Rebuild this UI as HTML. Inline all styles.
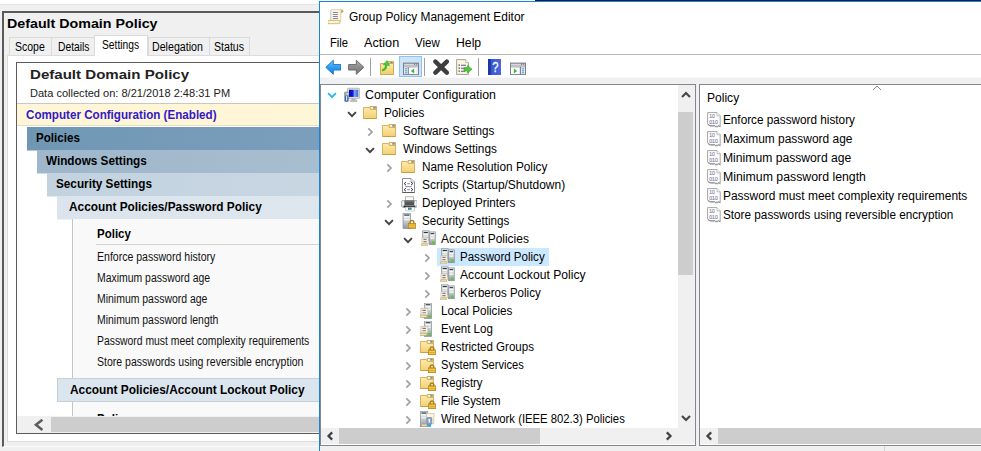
<!DOCTYPE html><html><head><meta charset="utf-8"><title>Group Policy</title><style>
*{box-sizing:border-box;margin:0;padding:0}
html,body{width:981px;height:451px;overflow:hidden;background:#f0f0f0;font-family:"Liberation Sans",sans-serif;color:#000}
.a{position:absolute}
.t{position:absolute;white-space:nowrap;transform-origin:0 0;line-height:1}
#left{position:absolute;left:0;top:0;width:319px;height:451px;overflow:hidden;background:#f0f0f0}
#right{position:absolute;left:319px;top:1px;width:662px;height:450px;background:#fff;border-left:1px solid #1883d7;border-top:1px solid #1883d7;overflow:hidden}
.b{font-weight:bold}
</style></head><body><div id="left">
<div class="a" style="left:0;top:0;width:319px;height:5px;background:#fdfdfd"></div>
<div class="a" style="left:0;top:4px;width:319px;height:1px;background:#e3e3e3"></div>
<div class="a" style="left:2px;top:11px;width:330px;height:436px;border-left:2px solid #5a5a5a;border-top:2px solid #5a5a5a;border-bottom:1px solid #fbfbfb;background:#f0f0f0"></div>
<div class="t b" style="left:7.04px;top:16px;font-size:13.7px;line-height:15px;transform:scaleX(1.0414)">Default Domain Policy</div>
<div class="a" style="left:7px;top:55px;width:330px;height:387px;border:1px solid #dcdcdc;background:#fff"></div>
<div class="a" style="left:9px;top:37px;width:43px;height:18px;background:#f0f0f0;border:1px solid #dadada;border-bottom:0"></div>
<div class="t" style="left:15.19px;top:40px;font-size:12px;line-height:14px;transform:scaleX(0.8753)">Scope</div>
<div class="a" style="left:51px;top:37px;width:44px;height:18px;background:#f0f0f0;border:1px solid #dadada;border-bottom:0"></div>
<div class="t" style="left:57.94px;top:40px;font-size:12px;line-height:14px;transform:scaleX(0.8584)">Details</div>
<div class="a" style="left:94px;top:35px;width:54px;height:21px;background:#fff;border:1px solid #dadada;border-bottom:0"></div>
<div class="t" style="left:102.31px;top:38px;font-size:12px;line-height:14px;transform:scaleX(0.8558)">Settings</div>
<div class="a" style="left:148px;top:37px;width:62px;height:18px;background:#f0f0f0;border:1px solid #dadada;border-bottom:0"></div>
<div class="t" style="left:152.09px;top:40px;font-size:12px;line-height:14px;transform:scaleX(0.8868)">Delegation</div>
<div class="a" style="left:209px;top:37px;width:41px;height:18px;background:#f0f0f0;border:1px solid #dadada;border-bottom:0"></div>
<div class="t" style="left:214.41px;top:40px;font-size:12px;line-height:14px;transform:scaleX(0.8824)">Status</div>
<div class="a" style="left:16px;top:62px;width:320px;height:372px;border:1px solid #5c5c5c;background:#fff"></div>
<div class="t b" style="left:29.60px;top:67px;font-size:13.6px;line-height:15px;transform:scaleX(1.1084);color:#222">Default Domain Policy</div>
<div class="t" style="left:29.82px;top:87px;font-size:11.6px;line-height:12px;transform:scaleX(0.9525);color:#222">Data collected on: 8/21/2018 2:48:31 PM</div>
<div class="a" style="left:17px;top:103px;width:320px;height:23px;background:#fef6d6;border-top:1px solid #c8c8c0;border-bottom:1px solid #e6dfc4"></div>
<div class="t b" style="left:26.34px;top:108px;font-size:12px;line-height:14px;transform:scaleX(0.9690);color:#3418c8">Computer Configuration (Enabled)</div>
<div class="a" style="left:27px;top:127px;width:300px;height:24px;background:linear-gradient(90deg,#6f97b4,#7b9fbc);border-bottom:1px solid rgba(255,255,255,.5)"></div>
<div class="t b" style="left:35.86px;top:131px;font-size:12px;line-height:14px;transform:scaleX(0.9669)">Policies</div>
<div class="a" style="left:37px;top:150px;width:300px;height:24px;background:linear-gradient(90deg,#9fb7cb,#a8bed1);border-bottom:1px solid rgba(255,255,255,.5)"></div>
<div class="t b" style="left:45.77px;top:154px;font-size:12px;line-height:14px;transform:scaleX(0.9763)">Windows Settings</div>
<div class="a" style="left:47px;top:173px;width:300px;height:24px;background:linear-gradient(90deg,#c2d2df,#c9d7e3);border-bottom:1px solid rgba(255,255,255,.5)"></div>
<div class="t b" style="left:56.02px;top:177px;font-size:12px;line-height:14px;transform:scaleX(0.9784)">Security Settings</div>
<div class="a" style="left:57px;top:196px;width:300px;height:24px;background:linear-gradient(90deg,#dbe4ec,#dfe7ee);border-bottom:1px solid rgba(255,255,255,.5)"></div>
<div class="t b" style="left:69.40px;top:200px;font-size:12px;line-height:14px;transform:scaleX(0.9863)">Account Policies/Password Policy</div>
<div class="a" style="left:72px;top:219px;width:260px;height:197px;background:#f9f9f9;border-left:1px solid #c4c4c4"></div>
<div class="t b" style="left:97.16px;top:227px;font-size:12px;line-height:14px;transform:scaleX(0.9578)">Policy</div>
<div class="a" style="left:96px;top:244px;width:240px;height:1px;background:#d4d4d4"></div>
<div class="t" style="left:96.59px;top:250px;font-size:12.5px;line-height:14px;transform:scaleX(0.8431);color:#111">Enforce password history</div>
<div class="t" style="left:96.57px;top:271px;font-size:12.5px;line-height:14px;transform:scaleX(0.8348);color:#111">Maximum password age</div>
<div class="t" style="left:96.56px;top:292px;font-size:12.5px;line-height:14px;transform:scaleX(0.8364);color:#111">Minimum password age</div>
<div class="t" style="left:96.93px;top:313px;font-size:12.5px;line-height:14px;transform:scaleX(0.8363);color:#111">Minimum password length</div>
<div class="t" style="left:96.57px;top:334px;font-size:12.5px;line-height:14px;transform:scaleX(0.8302);color:#111">Password must meet complexity requirements</div>
<div class="t" style="left:97.17px;top:355px;font-size:12.5px;line-height:14px;transform:scaleX(0.8417);color:#111">Store passwords using reversible encryption</div>
<div class="a" style="left:57px;top:378px;width:300px;height:24px;background:#dbe5ee;border:1px solid #c3d0dc"></div>
<div class="t b" style="left:69.80px;top:383px;font-size:12px;line-height:14px;transform:scaleX(0.9910)">Account Policies/Account Lockout Policy</div>
<div class="a" style="left:90px;top:404px;width:100px;height:12px;overflow:hidden"><div class="t b" style="left:7.16px;top:8px;font-size:12px;line-height:14px;transform:scaleX(0.9578)">Policy</div></div>
<div class="a" style="left:17px;top:416px;width:320px;height:17px;background:#f0f0f0"></div>
<div class="a" style="left:51px;top:417px;width:300px;height:15px;background:#cdcdcd"></div>
<svg class="a" style="left:33px;top:418px" width="12" height="14" viewBox="0 0 12 14"><path d="M9.4 1.7L3 6.8 9.4 11.9" fill="none" stroke="#5e5e5e" stroke-width="2.6"/></svg>
</div>
<div id="right">
<div class="t" style="left:29.26px;top:8px;font-size:12px;line-height:14px;transform:scaleX(0.9928)">Group Policy Management Editor</div>
<div class="t" style="left:9.91px;top:34px;font-size:12px;line-height:14px;transform:scaleX(0.9352)">File</div>
<div class="t" style="left:44.20px;top:34px;font-size:12px;line-height:14px;transform:scaleX(1.0556)">Action</div>
<div class="t" style="left:95.10px;top:34px;font-size:12px;line-height:14px;transform:scaleX(0.9592)">View</div>
<div class="t" style="left:135.95px;top:34px;font-size:12px;line-height:14px;transform:scaleX(1.0187)">Help</div>
<div class="a" style="left:0;top:52px;width:662px;height:1px;background:#b8b8b8"></div>
<svg class="a" style="left:8px;top:7px" width="16" height="16" viewBox="0 0 16 16"><linearGradient id="g1" x1="0" y1="0" x2="1" y2="0"><stop offset="0" stop-color="#e9e2cc"/><stop offset=".25" stop-color="#fefae8"/><stop offset="1" stop-color="#fbf1c8"/></linearGradient><path d="M13.2 1a1.3 1.3 0 0 1 1.4 2.2l-1.2.9-.6-2.4z" fill="#d9b040" stroke="#b08c30" stroke-width=".4"/><path d="M3.2 0.6H13.4L12.8 3.2V11.8H2.6V1.6Z" fill="url(#g1)" stroke="#c4bca4" stroke-width=".6"/><path d="M0.9 11.4H10.6a1.6 1.6 0 0 1 0 3.3H1.4a1.6 1.6 0 0 1-.5-3.3Z" fill="#fbeeb8" stroke="#c0a860" stroke-width=".7"/><path d="M2 12.9H9.4" stroke="#fffdf0" stroke-width="1"/><path d="M4.9 3.5H9.9M4.9 5.5H9.9M4.9 7.5H9.9M4.9 9.5H9.9" stroke="#8484b4" stroke-width="1"/></svg>
<svg class="a" style="left:4.5px;top:57px" width="16" height="16" viewBox="0 0 16 16"><linearGradient id="g2" x1="0" y1="0" x2="0" y2="1"><stop offset="0" stop-color="#7cc8ff"/><stop offset=".5" stop-color="#2e9cf0"/><stop offset="1" stop-color="#1a7edc"/></linearGradient><path d="M0.8 8.3L8.3 1.3V5.6H16V11H8.3V15.3Z" fill="url(#g2)" stroke="#1f74c8" stroke-width="1" stroke-linejoin="round"/></svg>
<svg class="a" style="left:27.5px;top:57px" width="16" height="16" viewBox="0 0 16 16"><linearGradient id="g3" x1="0" y1="0" x2="0" y2="1"><stop offset="0" stop-color="#b4b4b4"/><stop offset=".5" stop-color="#8c8c8c"/><stop offset="1" stop-color="#787878"/></linearGradient><path d="M15.8 8.3L8.3 1.3V5.6H0.6V11H8.3V15.3Z" fill="url(#g3)" stroke="#6a6a6a" stroke-width="1" stroke-linejoin="round"/></svg>
<div class="a" style="left:50px;top:56px;width:1px;height:18px;background:#a0a0a0"></div>
<div class="a" style="left:104px;top:56px;width:1px;height:18px;background:#a0a0a0"></div>
<div class="a" style="left:158px;top:56px;width:1px;height:18px;background:#a0a0a0"></div>
<svg class="a" style="left:59.80000000000001px;top:57.7px" width="16" height="16" viewBox="0 0 16 16"><linearGradient id="g4" x1="0" y1="0" x2="0" y2="1"><stop offset="0" stop-color="#fdebb0"/><stop offset="1" stop-color="#f1cb6a"/></linearGradient><path d="M7 1.5H13.5V5H7Z" fill="#f2d484" stroke="#d4ac54"/><rect x="10.3" y="2.2" width="2.3" height="1.3" fill="#2f86e8"/><path d="M0.5 3.5H13.5V14.5H0.5Z" fill="url(#g4)" stroke="#d4aa50"/><path d="M2 10.5C4.5 10 6 8 6.2 5.2" fill="none" stroke="#3cc030" stroke-width="2.2"/><path d="M3.2 4.8L7 0.6 9.6 5.6Z" fill="#44cc36" stroke="#2ea02c" stroke-width=".5"/></svg>
<div class="a" style="left:79px;top:54px;width:23px;height:21px;background:#cce4f7;border:1px solid #8cc4f2"></div>
<svg class="a" style="left:83px;top:58.5px" width="16" height="16" viewBox="0 0 16 16"><rect x="0" y="1.6" width="16" height="12.4" fill="#7a808c"/><rect x="1" y="2.8" width="10" height=".9" fill="#fff"/><rect x="12.1" y="2.8" width="1" height=".9" fill="#fff"/><rect x="13.9" y="2.8" width="1" height=".9" fill="#fff"/><rect x="1" y="4.5" width="14" height="1" fill="#fff"/><rect x="1" y="6.3" width="3.7" height="6.8" fill="#fff"/><rect x="5.8" y="6.3" width="9.2" height="6.8" fill="#fff"/><rect x="13.2" y="6.3" width="1.8" height="6.8" fill="#ececec"/><path d="M1.7 7.9H4.1M1.7 9.9H4.1M1.7 11.9H4.1" stroke="#3a7ac8" stroke-width="1"/><path d="M11.2 7.4V12.6L7.8 10Z" fill="#3cb83c"/></svg>
<svg class="a" style="left:112.5px;top:57px" width="16" height="16" viewBox="0 0 16 16"><path d="M2.4 2.6L13.8 13.6M13.8 2.6L2.4 13.6" stroke="#3e3e3e" stroke-width="4.4" stroke-linecap="round"/></svg>
<svg class="a" style="left:135.8px;top:57px" width="16" height="16" viewBox="0 0 16 16"><path d="M0.6 0.6H9.6L12.6 3.6V15.4H0.6Z" fill="#fbf5dc" stroke="#a2a2a2"/><path d="M9.6 0.6V3.6H12.6" fill="#fff" stroke="#b0b0b0" stroke-width=".8"/><path d="M2.6 6.2h1.2M2.6 9.2h1.2M2.6 12.2h1.2" stroke="#333" stroke-width="1.2"/><path d="M5 6.2H10M5 9.2H8M5 12.2H9.4" stroke="#5a58a8" stroke-width="1.1"/><path d="M8 8.6H11.4V6.4L16 10.2 11.4 14V11.8H8Z" fill="#4cc838" stroke="#2f9a2a" stroke-width=".6"/></svg>
<svg class="a" style="left:168px;top:56.8px" width="13" height="16" viewBox="0 0 13 16"><linearGradient id="g5" x1="0" y1="0" x2="1" y2="0"><stop offset="0" stop-color="#2742b4"/><stop offset=".3" stop-color="#3a5ad4"/><stop offset="1" stop-color="#4a68dc"/></linearGradient><rect x="0" y="0" width="13" height="16" fill="url(#g5)"/><rect x="0" y="0" width="2.8" height="16" fill="#1d38a0"/><text x="0" y="13.4" text-anchor="middle" font-family="Liberation Sans, sans-serif" font-size="15" fill="#fff" stroke="#fff" stroke-width=".3" transform="translate(7.4,0) scale(.74,1)">?</text></svg>
<svg class="a" style="left:190px;top:58.5px" width="16" height="16" viewBox="0 0 16 16"><rect x="0" y="1.6" width="16" height="12.4" fill="#7a808c"/><rect x="1" y="2.8" width="10" height=".9" fill="#fff"/><rect x="12.1" y="2.8" width="1" height=".9" fill="#fff"/><rect x="13.9" y="2.8" width="1" height=".9" fill="#fff"/><rect x="1" y="4.5" width="14" height="1" fill="#fff"/><rect x="1" y="6.3" width="8.8" height="6.8" fill="#fff"/><rect x="11" y="6.3" width="4" height="6.8" fill="#fff"/><path d="M11.7 7.9H14.3M11.7 9.9H14.3M11.7 11.9H14.3" stroke="#3a7ac8" stroke-width="1"/><path d="M3.8 7.4V12.6L7.2 10Z" fill="#3cb83c"/></svg>
<div class="a" style="left:0;top:75px;width:662px;height:400px;background:#f0f0f0;border-top:1px solid #f8f8f8"></div>
<div class="a" style="left:0;top:82px;width:376px;height:362px;background:#fff;border:1px solid #828790"></div>
<div class="a" style="left:379px;top:82px;width:300px;height:362px;background:#fff;border:1px solid #828790"></div>
<svg class="a" style="left:7.400000000000034px;top:90.1px" width="10" height="7" viewBox="0 0 10 7"><path d="M1.1 1.2L5 5.1 8.9 1.2" fill="none" stroke="#2cb4f0" stroke-width="1.9"/></svg>
<svg class="a" style="left:24.0px;top:85px" width="16" height="16" viewBox="0 0 16 16"><linearGradient id="g6" x1="0" y1="0" x2="1" y2="0"><stop offset="0" stop-color="#0008c0"/><stop offset=".45" stop-color="#0a20d8"/><stop offset=".55" stop-color="#88a4f8"/><stop offset="1" stop-color="#3c64ec"/></linearGradient><rect x="3.4" y="1.2" width="12.2" height="10.4" rx="1" fill="#dfdcd0" stroke="#a8a79c" stroke-width=".7"/><rect x="5" y="2.8" width="9.2" height="7.1" fill="url(#g6)"/><path d="M8 11.8h3l.6 1.4H7.4z" fill="#b8b8b4"/><rect x="6.2" y="13" width="6.8" height="1.6" rx=".6" fill="#c8c8c4" stroke="#9a9a96" stroke-width=".5"/><rect x="0.4" y="5" width="4.2" height="9.6" rx="1.2" fill="#a9acb0" stroke="#7c7f86" stroke-width=".6"/><rect x="1.1" y="8.4" width="3" height="6" rx="1.2" fill="#2f5fb4"/><rect x="2" y="9" width="1.2" height="4.6" fill="#dfeaff"/><rect x="1.2" y="6.6" width="1" height="1" fill="#4cd038"/><path d="M2.5 6.2l2 1.6M4.5 6.2l-2 1.6" stroke="#f4f4f4" stroke-width=".8"/></svg>
<div class="t" style="left:44.82px;top:86px;font-size:12px;line-height:14px;transform:scaleX(1.0280)">Computer Configuration</div>
<svg class="a" style="left:26.53000000000003px;top:108.5px" width="10" height="7" viewBox="0 0 10 7"><path d="M1.1 1.2L5 5.1 8.9 1.2" fill="none" stroke="#404040" stroke-width="1.9"/></svg>
<svg class="a" style="left:42.9px;top:103px" width="16" height="16" viewBox="0 0 16 16"><linearGradient id="g7" x1="0" y1="0" x2="0" y2="1"><stop offset="0" stop-color="#fdebb0"/><stop offset="1" stop-color="#f3cf72"/></linearGradient><path d="M7 1.5H13.5V6H7Z" fill="#f2d484" stroke="#d4ac54"/><rect x="8" y="2.2" width="2.4" height="1.3" fill="#fff"/><rect x="10.3" y="2.2" width="2.3" height="1.3" fill="#2f86e8"/><path d="M0.5 2.5H6.2L7.6 4.5H13.5V13.5H0.5Z" fill="url(#g7)" stroke="#d8b25a"/><path d="M0.5 13.5H13.5" stroke="#c99f45"/></svg>
<div class="t" style="left:63.50px;top:104px;font-size:12px;line-height:14px;transform:scaleX(0.9747)">Policies</div>
<svg class="a" style="left:46.960000000000036px;top:125.19999999999999px" width="7" height="10" viewBox="0 0 7 10"><path d="M1.3 1.3L5 5 1.3 8.7" fill="none" stroke="#a0a0a0" stroke-width="1.7"/></svg>
<svg class="a" style="left:61.9px;top:121px" width="16" height="16" viewBox="0 0 16 16"><linearGradient id="g8" x1="0" y1="0" x2="0" y2="1"><stop offset="0" stop-color="#fdebb0"/><stop offset="1" stop-color="#f3cf72"/></linearGradient><path d="M7 1.5H13.5V6H7Z" fill="#f2d484" stroke="#d4ac54"/><rect x="8" y="2.2" width="2.4" height="1.3" fill="#fff"/><rect x="10.3" y="2.2" width="2.3" height="1.3" fill="#2f86e8"/><path d="M0.5 2.5H6.2L7.6 4.5H13.5V13.5H0.5Z" fill="url(#g8)" stroke="#d8b25a"/><path d="M0.5 13.5H13.5" stroke="#c99f45"/></svg>
<div class="t" style="left:83.23px;top:122px;font-size:12px;line-height:14px;transform:scaleX(0.9699)">Software Settings</div>
<svg class="a" style="left:45.460000000000036px;top:144.5px" width="10" height="7" viewBox="0 0 10 7"><path d="M1.1 1.2L5 5.1 8.9 1.2" fill="none" stroke="#404040" stroke-width="1.9"/></svg>
<svg class="a" style="left:61.9px;top:139px" width="16" height="16" viewBox="0 0 16 16"><linearGradient id="g9" x1="0" y1="0" x2="0" y2="1"><stop offset="0" stop-color="#fdebb0"/><stop offset="1" stop-color="#f3cf72"/></linearGradient><path d="M7 1.5H13.5V6H7Z" fill="#f2d484" stroke="#d4ac54"/><rect x="8" y="2.2" width="2.4" height="1.3" fill="#fff"/><rect x="10.3" y="2.2" width="2.3" height="1.3" fill="#2f86e8"/><path d="M0.5 2.5H6.2L7.6 4.5H13.5V13.5H0.5Z" fill="url(#g9)" stroke="#d8b25a"/><path d="M0.5 13.5H13.5" stroke="#c99f45"/></svg>
<div class="t" style="left:83.43px;top:140px;font-size:12px;line-height:14px;transform:scaleX(0.9843)">Windows Settings</div>
<svg class="a" style="left:65.89000000000004px;top:161.2px" width="7" height="10" viewBox="0 0 7 10"><path d="M1.3 1.3L5 5 1.3 8.7" fill="none" stroke="#a0a0a0" stroke-width="1.7"/></svg>
<svg class="a" style="left:80.8px;top:157px" width="16" height="16" viewBox="0 0 16 16"><linearGradient id="g10" x1="0" y1="0" x2="0" y2="1"><stop offset="0" stop-color="#fdebb0"/><stop offset="1" stop-color="#f3cf72"/></linearGradient><path d="M7 1.5H13.5V6H7Z" fill="#f2d484" stroke="#d4ac54"/><rect x="8" y="2.2" width="2.4" height="1.3" fill="#fff"/><rect x="10.3" y="2.2" width="2.3" height="1.3" fill="#2f86e8"/><path d="M0.5 2.5H6.2L7.6 4.5H13.5V13.5H0.5Z" fill="url(#g10)" stroke="#d8b25a"/><path d="M0.5 13.5H13.5" stroke="#c99f45"/></svg>
<div class="t" style="left:102.39px;top:158px;font-size:12px;line-height:14px;transform:scaleX(0.9845)">Name Resolution Policy</div>
<svg class="a" style="left:80.8px;top:175px" width="16" height="16" viewBox="0 0 16 16"><path d="M1.5 1.5H10L13.5 5V15.5H1.5Z" fill="#fff" stroke="#8e8e8e"/><path d="M1.5 15.5H13.5" stroke="#5c5c5c"/><path d="M10 1.5V5H13.5" fill="#f4f4f4" stroke="#9a9a9a" stroke-width=".8"/><path d="M5 5.2L3.2 6.7 5 8.2M10 5.2l1.8 1.5L10 8.2M5 11.2l-1.8 1.5L5 14.2M10 11.2l1.8 1.5-1.8 1.5" fill="none" stroke="#33333c" stroke-width="1"/><path d="M6.2 6.7H9M6.2 12.7H9M4.4 9.7H10.6" stroke="#8484b4" stroke-width="1"/></svg>
<div class="t" style="left:102.09px;top:176px;font-size:12px;line-height:14px;transform:scaleX(0.9981)">Scripts (Startup/Shutdown)</div>
<svg class="a" style="left:65.89000000000004px;top:197.2px" width="7" height="10" viewBox="0 0 7 10"><path d="M1.3 1.3L5 5 1.3 8.7" fill="none" stroke="#a0a0a0" stroke-width="1.7"/></svg>
<svg class="a" style="left:81.0px;top:193.6px" width="16" height="16" viewBox="0 0 16 16"><rect x="4.5" y="0.8" width="8" height="4.6" fill="#fff" stroke="#a4a4a4" stroke-width=".8"/><rect x="0.6" y="4.6" width="15.6" height="6.6" rx=".8" fill="#d9d9d9" stroke="#8a8a8a" stroke-width=".6"/><rect x="3.6" y="4.6" width="9.6" height="4.6" fill="#555"/><rect x="3.6" y="4.6" width="9.6" height="1.6" fill="#6d6d6d"/><rect x="2.6" y="9.6" width="11.6" height="1.8" fill="#222"/><rect x="1.3" y="5.6" width="1.6" height="3.6" fill="#f4f4f4"/><rect x="13.8" y="5.6" width="1.6" height="3.6" fill="#f4f4f4"/><path d="M4.6 11.2H13.4V15H4.6Z" fill="#fff" stroke="#b4c0d0" stroke-width=".7"/><rect x="7" y="11.6" width="1.8" height="2.2" fill="#2c6fd0"/><rect x="8.8" y="11.6" width="1.8" height="2.2" fill="#2e9a3c"/></svg>
<div class="t" style="left:102.02px;top:194px;font-size:12px;line-height:14px;transform:scaleX(0.9793)">Deployed Printers</div>
<svg class="a" style="left:64.39000000000004px;top:216.5px" width="10" height="7" viewBox="0 0 10 7"><path d="M1.1 1.2L5 5.1 8.9 1.2" fill="none" stroke="#404040" stroke-width="1.9"/></svg>
<svg class="a" style="left:80.8px;top:211px" width="16" height="16" viewBox="0 0 16 16"><linearGradient id="g11" x1="0" y1="0" x2="0" y2="1"><stop offset="0" stop-color="#dfe3e6"/><stop offset=".5" stop-color="#c9ced3"/><stop offset="1" stop-color="#8d959d"/></linearGradient><rect x="2" y="0.3" width="7.6" height="15.2" fill="url(#g11)" stroke="#8a9098" stroke-width=".7"/><rect x="3.2" y="1.5" width="5.199999999999999" height="1.1" fill="#2c3840"/><rect x="3" y="3.0999999999999996" width="5.6" height="1.6" fill="#f6f8fa"/><rect x="3" y="5.7" width="5.6" height="1.6" fill="#eef2f5"/><g transform="translate(7,6.8)"><path d="M2.2 3.8V2.6a1.8 1.8 0 0 1 3.6 0V3.8" fill="none" stroke="#a8822c" stroke-width="1.5"/><rect x="0.3" y="3.6" width="7.4" height="5" fill="#d9a41e" stroke="#a87c14" stroke-width="0.6"/><path d="M0.7 5.1H7.3M0.7 6.9H7.3" stroke="#f2d060" stroke-width="0.9"/></g></svg>
<div class="t" style="left:102.10px;top:212px;font-size:12px;line-height:14px;transform:scaleX(0.9701)">Security Settings</div>
<svg class="a" style="left:83.32000000000005px;top:234.5px" width="10" height="7" viewBox="0 0 10 7"><path d="M1.1 1.2L5 5.1 8.9 1.2" fill="none" stroke="#404040" stroke-width="1.9"/></svg>
<svg class="a" style="left:100.6px;top:228.3px" width="16" height="16" viewBox="0 0 16 16"><linearGradient id="g12" x1="0" y1="0" x2="0" y2="1"><stop offset="0" stop-color="#dfe3e6"/><stop offset=".5" stop-color="#c9ced3"/><stop offset="1" stop-color="#8d959d"/></linearGradient><rect x="1.5" y="0.8" width="6.6" height="9.5" fill="url(#g12)" stroke="#8a9098" stroke-width=".7"/><rect x="2.7" y="2.0" width="4.199999999999999" height="1.1" fill="#2c3840"/><rect x="2.5" y="3.5999999999999996" width="4.6" height="1.6" fill="#f6f8fa"/><rect x="2.5" y="6.2" width="4.6" height="1.6" fill="#eef2f5"/><linearGradient id="g13" x1="0" y1="0" x2="0" y2="1"><stop offset="0" stop-color="#dfe3e6"/><stop offset=".5" stop-color="#c9ced3"/><stop offset="1" stop-color="#8d959d"/></linearGradient><rect x="8.4" y="1.9" width="5.9" height="12.8" fill="url(#g13)" stroke="#8a9098" stroke-width=".7"/><rect x="9.6" y="3.0999999999999996" width="3.5000000000000004" height="1.1" fill="#2c3840"/><rect x="9.4" y="4.699999999999999" width="3.9000000000000004" height="1.6" fill="#f6f8fa"/><rect x="9.4" y="7.300000000000001" width="3.9000000000000004" height="1.6" fill="#eef2f5"/><rect x="11.100000000000001" y="11.5" width="2.3" height="2.3" fill="#4fd21c"/><g transform="translate(0.2,7.2) scale(1)"><path d="M0.8 0.4H7.2V6.6H0.8Z" fill="#fdf4cc" stroke="#b8b0a0" stroke-width=".6"/><path d="M2.2 2.2H5.4M2.2 4.4H5.4" stroke="#7f78b4" stroke-width="1.1"/><rect x="0" y="6.6" width="6.4" height="2.1" rx=".8" fill="#f9e7a4" stroke="#a89c7c" stroke-width=".6"/></g></svg>
<div class="t" style="left:120.95px;top:230px;font-size:12px;line-height:14px;transform:scaleX(0.9988)">Account Policies</div>
<div class="a" style="left:117px;top:246px;width:112px;height:18px;background:#cce8ff"></div>
<svg class="a" style="left:103.75px;top:251.2px" width="7" height="10" viewBox="0 0 7 10"><path d="M1.3 1.3L5 5 1.3 8.7" fill="none" stroke="#a0a0a0" stroke-width="1.7"/></svg>
<svg class="a" style="left:119.5px;top:246.3px" width="16" height="16" viewBox="0 0 16 16"><linearGradient id="g14" x1="0" y1="0" x2="0" y2="1"><stop offset="0" stop-color="#dfe3e6"/><stop offset=".5" stop-color="#c9ced3"/><stop offset="1" stop-color="#8d959d"/></linearGradient><rect x="1.5" y="0.8" width="6.6" height="9.5" fill="url(#g14)" stroke="#8a9098" stroke-width=".7"/><rect x="2.7" y="2.0" width="4.199999999999999" height="1.1" fill="#2c3840"/><rect x="2.5" y="3.5999999999999996" width="4.6" height="1.6" fill="#f6f8fa"/><rect x="2.5" y="6.2" width="4.6" height="1.6" fill="#eef2f5"/><linearGradient id="g15" x1="0" y1="0" x2="0" y2="1"><stop offset="0" stop-color="#dfe3e6"/><stop offset=".5" stop-color="#c9ced3"/><stop offset="1" stop-color="#8d959d"/></linearGradient><rect x="8.4" y="1.9" width="5.9" height="12.8" fill="url(#g15)" stroke="#8a9098" stroke-width=".7"/><rect x="9.6" y="3.0999999999999996" width="3.5000000000000004" height="1.1" fill="#2c3840"/><rect x="9.4" y="4.699999999999999" width="3.9000000000000004" height="1.6" fill="#f6f8fa"/><rect x="9.4" y="7.300000000000001" width="3.9000000000000004" height="1.6" fill="#eef2f5"/><rect x="11.100000000000001" y="11.5" width="2.3" height="2.3" fill="#4fd21c"/><g transform="translate(0.2,7.2) scale(1)"><path d="M0.8 0.4H7.2V6.6H0.8Z" fill="#fdf4cc" stroke="#b8b0a0" stroke-width=".6"/><path d="M2.2 2.2H5.4M2.2 4.4H5.4" stroke="#7f78b4" stroke-width="1.1"/><rect x="0" y="6.6" width="6.4" height="2.1" rx=".8" fill="#f9e7a4" stroke="#a89c7c" stroke-width=".6"/></g></svg>
<div class="t" style="left:140.25px;top:248px;font-size:12px;line-height:14px;transform:scaleX(0.9616)">Password Policy</div>
<svg class="a" style="left:103.75px;top:269.2px" width="7" height="10" viewBox="0 0 7 10"><path d="M1.3 1.3L5 5 1.3 8.7" fill="none" stroke="#a0a0a0" stroke-width="1.7"/></svg>
<svg class="a" style="left:119.5px;top:264.3px" width="16" height="16" viewBox="0 0 16 16"><linearGradient id="g16" x1="0" y1="0" x2="0" y2="1"><stop offset="0" stop-color="#dfe3e6"/><stop offset=".5" stop-color="#c9ced3"/><stop offset="1" stop-color="#8d959d"/></linearGradient><rect x="1.5" y="0.8" width="6.6" height="9.5" fill="url(#g16)" stroke="#8a9098" stroke-width=".7"/><rect x="2.7" y="2.0" width="4.199999999999999" height="1.1" fill="#2c3840"/><rect x="2.5" y="3.5999999999999996" width="4.6" height="1.6" fill="#f6f8fa"/><rect x="2.5" y="6.2" width="4.6" height="1.6" fill="#eef2f5"/><linearGradient id="g17" x1="0" y1="0" x2="0" y2="1"><stop offset="0" stop-color="#dfe3e6"/><stop offset=".5" stop-color="#c9ced3"/><stop offset="1" stop-color="#8d959d"/></linearGradient><rect x="8.4" y="1.9" width="5.9" height="12.8" fill="url(#g17)" stroke="#8a9098" stroke-width=".7"/><rect x="9.6" y="3.0999999999999996" width="3.5000000000000004" height="1.1" fill="#2c3840"/><rect x="9.4" y="4.699999999999999" width="3.9000000000000004" height="1.6" fill="#f6f8fa"/><rect x="9.4" y="7.300000000000001" width="3.9000000000000004" height="1.6" fill="#eef2f5"/><rect x="11.100000000000001" y="11.5" width="2.3" height="2.3" fill="#4fd21c"/><g transform="translate(0.2,7.2) scale(1)"><path d="M0.8 0.4H7.2V6.6H0.8Z" fill="#fdf4cc" stroke="#b8b0a0" stroke-width=".6"/><path d="M2.2 2.2H5.4M2.2 4.4H5.4" stroke="#7f78b4" stroke-width="1.1"/><rect x="0" y="6.6" width="6.4" height="2.1" rx=".8" fill="#f9e7a4" stroke="#a89c7c" stroke-width=".6"/></g></svg>
<div class="t" style="left:140.30px;top:266px;font-size:12px;line-height:14px;transform:scaleX(1.0118)">Account Lockout Policy</div>
<svg class="a" style="left:103.75px;top:287.2px" width="7" height="10" viewBox="0 0 7 10"><path d="M1.3 1.3L5 5 1.3 8.7" fill="none" stroke="#a0a0a0" stroke-width="1.7"/></svg>
<svg class="a" style="left:119.5px;top:282.3px" width="16" height="16" viewBox="0 0 16 16"><linearGradient id="g18" x1="0" y1="0" x2="0" y2="1"><stop offset="0" stop-color="#dfe3e6"/><stop offset=".5" stop-color="#c9ced3"/><stop offset="1" stop-color="#8d959d"/></linearGradient><rect x="1.5" y="0.8" width="6.6" height="9.5" fill="url(#g18)" stroke="#8a9098" stroke-width=".7"/><rect x="2.7" y="2.0" width="4.199999999999999" height="1.1" fill="#2c3840"/><rect x="2.5" y="3.5999999999999996" width="4.6" height="1.6" fill="#f6f8fa"/><rect x="2.5" y="6.2" width="4.6" height="1.6" fill="#eef2f5"/><linearGradient id="g19" x1="0" y1="0" x2="0" y2="1"><stop offset="0" stop-color="#dfe3e6"/><stop offset=".5" stop-color="#c9ced3"/><stop offset="1" stop-color="#8d959d"/></linearGradient><rect x="8.4" y="1.9" width="5.9" height="12.8" fill="url(#g19)" stroke="#8a9098" stroke-width=".7"/><rect x="9.6" y="3.0999999999999996" width="3.5000000000000004" height="1.1" fill="#2c3840"/><rect x="9.4" y="4.699999999999999" width="3.9000000000000004" height="1.6" fill="#f6f8fa"/><rect x="9.4" y="7.300000000000001" width="3.9000000000000004" height="1.6" fill="#eef2f5"/><rect x="11.100000000000001" y="11.5" width="2.3" height="2.3" fill="#4fd21c"/><g transform="translate(0.2,7.2) scale(1)"><path d="M0.8 0.4H7.2V6.6H0.8Z" fill="#fdf4cc" stroke="#b8b0a0" stroke-width=".6"/><path d="M2.2 2.2H5.4M2.2 4.4H5.4" stroke="#7f78b4" stroke-width="1.1"/><rect x="0" y="6.6" width="6.4" height="2.1" rx=".8" fill="#f9e7a4" stroke="#a89c7c" stroke-width=".6"/></g></svg>
<div class="t" style="left:140.25px;top:284px;font-size:12px;line-height:14px;transform:scaleX(0.9597)">Kerberos Policy</div>
<svg class="a" style="left:84.82000000000005px;top:305.2px" width="7" height="10" viewBox="0 0 7 10"><path d="M1.3 1.3L5 5 1.3 8.7" fill="none" stroke="#a0a0a0" stroke-width="1.7"/></svg>
<svg class="a" style="left:100.1px;top:301.4px" width="16" height="16" viewBox="0 0 16 16"><linearGradient id="g20" x1="0" y1="0" x2="0" y2="1"><stop offset="0" stop-color="#dfe3e6"/><stop offset=".5" stop-color="#c9ced3"/><stop offset="1" stop-color="#8d959d"/></linearGradient><rect x="4.6" y="0" width="7.0" height="15.4" fill="url(#g20)" stroke="#8a9098" stroke-width=".7"/><rect x="5.8" y="1.2" width="4.6" height="1.1" fill="#2c3840"/><rect x="5.6" y="2.8" width="5.0" height="1.6" fill="#f6f8fa"/><rect x="5.6" y="5.4" width="5.0" height="1.6" fill="#eef2f5"/><rect x="8.399999999999999" y="12.2" width="2.3" height="2.3" fill="#4fd21c"/><g transform="translate(0,4.9) scale(1.1)"><path d="M0.8 0.4H7.2V6.6H0.8Z" fill="#fdf4cc" stroke="#b8b0a0" stroke-width=".6"/><path d="M2.2 2.2H5.4M2.2 4.4H5.4" stroke="#7f78b4" stroke-width="1.1"/><rect x="0" y="6.6" width="6.4" height="2.1" rx=".8" fill="#f9e7a4" stroke="#a89c7c" stroke-width=".6"/></g></svg>
<div class="t" style="left:120.92px;top:302px;font-size:12px;line-height:14px;transform:scaleX(0.9725)">Local Policies</div>
<svg class="a" style="left:84.82000000000005px;top:323.2px" width="7" height="10" viewBox="0 0 7 10"><path d="M1.3 1.3L5 5 1.3 8.7" fill="none" stroke="#a0a0a0" stroke-width="1.7"/></svg>
<svg class="a" style="left:100.1px;top:319.4px" width="16" height="16" viewBox="0 0 16 16"><linearGradient id="g21" x1="0" y1="0" x2="0" y2="1"><stop offset="0" stop-color="#dfe3e6"/><stop offset=".5" stop-color="#c9ced3"/><stop offset="1" stop-color="#8d959d"/></linearGradient><rect x="4.6" y="0" width="7.0" height="15.4" fill="url(#g21)" stroke="#8a9098" stroke-width=".7"/><rect x="5.8" y="1.2" width="4.6" height="1.1" fill="#2c3840"/><rect x="5.6" y="2.8" width="5.0" height="1.6" fill="#f6f8fa"/><rect x="5.6" y="5.4" width="5.0" height="1.6" fill="#eef2f5"/><rect x="8.399999999999999" y="12.2" width="2.3" height="2.3" fill="#4fd21c"/><g transform="translate(0,4.9) scale(1.1)"><path d="M0.8 0.4H7.2V6.6H0.8Z" fill="#fdf4cc" stroke="#b8b0a0" stroke-width=".6"/><path d="M2.2 2.2H5.4M2.2 4.4H5.4" stroke="#7f78b4" stroke-width="1.1"/><rect x="0" y="6.6" width="6.4" height="2.1" rx=".8" fill="#f9e7a4" stroke="#a89c7c" stroke-width=".6"/></g></svg>
<div class="t" style="left:121.32px;top:320px;font-size:12px;line-height:14px;transform:scaleX(0.9590)">Event Log</div>
<svg class="a" style="left:84.82000000000005px;top:341.2px" width="7" height="10" viewBox="0 0 7 10"><path d="M1.3 1.3L5 5 1.3 8.7" fill="none" stroke="#a0a0a0" stroke-width="1.7"/></svg>
<svg class="a" style="left:99.7px;top:337px" width="16" height="16" viewBox="0 0 16 16"><linearGradient id="g22" x1="0" y1="0" x2="0" y2="1"><stop offset="0" stop-color="#fdebb0"/><stop offset="1" stop-color="#f3cf72"/></linearGradient><path d="M7 1.5H13.5V6H7Z" fill="#f2d484" stroke="#d4ac54"/><rect x="8" y="2.2" width="2.4" height="1.3" fill="#fff"/><rect x="10.3" y="2.2" width="2.3" height="1.3" fill="#2f86e8"/><path d="M0.5 2.5H6.2L7.6 4.5H13.5V13.5H0.5Z" fill="url(#g22)" stroke="#d8b25a"/><path d="M0.5 13.5H13.5" stroke="#c99f45"/><g transform="translate(8,7.3)"><path d="M2.2 3.8V2.6a1.8 1.8 0 0 1 3.6 0V3.8" fill="none" stroke="#a8822c" stroke-width="1.5"/><rect x="0.3" y="3.6" width="7.4" height="5" fill="#d9a41e" stroke="#a87c14" stroke-width="0.6"/><path d="M0.7 5.1H7.3M0.7 6.9H7.3" stroke="#f2d060" stroke-width="0.9"/></g></svg>
<div class="t" style="left:120.92px;top:338px;font-size:12px;line-height:14px;transform:scaleX(0.9610)">Restricted Groups</div>
<svg class="a" style="left:84.82000000000005px;top:359.2px" width="7" height="10" viewBox="0 0 7 10"><path d="M1.3 1.3L5 5 1.3 8.7" fill="none" stroke="#a0a0a0" stroke-width="1.7"/></svg>
<svg class="a" style="left:99.7px;top:355px" width="16" height="16" viewBox="0 0 16 16"><linearGradient id="g23" x1="0" y1="0" x2="0" y2="1"><stop offset="0" stop-color="#fdebb0"/><stop offset="1" stop-color="#f3cf72"/></linearGradient><path d="M7 1.5H13.5V6H7Z" fill="#f2d484" stroke="#d4ac54"/><rect x="8" y="2.2" width="2.4" height="1.3" fill="#fff"/><rect x="10.3" y="2.2" width="2.3" height="1.3" fill="#2f86e8"/><path d="M0.5 2.5H6.2L7.6 4.5H13.5V13.5H0.5Z" fill="url(#g23)" stroke="#d8b25a"/><path d="M0.5 13.5H13.5" stroke="#c99f45"/><g transform="translate(8,7.3)"><path d="M2.2 3.8V2.6a1.8 1.8 0 0 1 3.6 0V3.8" fill="none" stroke="#a8822c" stroke-width="1.5"/><rect x="0.3" y="3.6" width="7.4" height="5" fill="#d9a41e" stroke="#a87c14" stroke-width="0.6"/><path d="M0.7 5.1H7.3M0.7 6.9H7.3" stroke="#f2d060" stroke-width="0.9"/></g></svg>
<div class="t" style="left:121.00px;top:356px;font-size:12px;line-height:14px;transform:scaleX(0.9270)">System Services</div>
<svg class="a" style="left:84.82000000000005px;top:377.2px" width="7" height="10" viewBox="0 0 7 10"><path d="M1.3 1.3L5 5 1.3 8.7" fill="none" stroke="#a0a0a0" stroke-width="1.7"/></svg>
<svg class="a" style="left:99.7px;top:373px" width="16" height="16" viewBox="0 0 16 16"><linearGradient id="g24" x1="0" y1="0" x2="0" y2="1"><stop offset="0" stop-color="#fdebb0"/><stop offset="1" stop-color="#f3cf72"/></linearGradient><path d="M7 1.5H13.5V6H7Z" fill="#f2d484" stroke="#d4ac54"/><rect x="8" y="2.2" width="2.4" height="1.3" fill="#fff"/><rect x="10.3" y="2.2" width="2.3" height="1.3" fill="#2f86e8"/><path d="M0.5 2.5H6.2L7.6 4.5H13.5V13.5H0.5Z" fill="url(#g24)" stroke="#d8b25a"/><path d="M0.5 13.5H13.5" stroke="#c99f45"/><g transform="translate(8,7.3)"><path d="M2.2 3.8V2.6a1.8 1.8 0 0 1 3.6 0V3.8" fill="none" stroke="#a8822c" stroke-width="1.5"/><rect x="0.3" y="3.6" width="7.4" height="5" fill="#d9a41e" stroke="#a87c14" stroke-width="0.6"/><path d="M0.7 5.1H7.3M0.7 6.9H7.3" stroke="#f2d060" stroke-width="0.9"/></g></svg>
<div class="t" style="left:121.32px;top:374px;font-size:12px;line-height:14px;transform:scaleX(0.9425)">Registry</div>
<svg class="a" style="left:84.82000000000005px;top:395.2px" width="7" height="10" viewBox="0 0 7 10"><path d="M1.3 1.3L5 5 1.3 8.7" fill="none" stroke="#a0a0a0" stroke-width="1.7"/></svg>
<svg class="a" style="left:99.7px;top:391px" width="16" height="16" viewBox="0 0 16 16"><linearGradient id="g25" x1="0" y1="0" x2="0" y2="1"><stop offset="0" stop-color="#fdebb0"/><stop offset="1" stop-color="#f3cf72"/></linearGradient><path d="M7 1.5H13.5V6H7Z" fill="#f2d484" stroke="#d4ac54"/><rect x="8" y="2.2" width="2.4" height="1.3" fill="#fff"/><rect x="10.3" y="2.2" width="2.3" height="1.3" fill="#2f86e8"/><path d="M0.5 2.5H6.2L7.6 4.5H13.5V13.5H0.5Z" fill="url(#g25)" stroke="#d8b25a"/><path d="M0.5 13.5H13.5" stroke="#c99f45"/><g transform="translate(8,7.3)"><path d="M2.2 3.8V2.6a1.8 1.8 0 0 1 3.6 0V3.8" fill="none" stroke="#a8822c" stroke-width="1.5"/><rect x="0.3" y="3.6" width="7.4" height="5" fill="#d9a41e" stroke="#a87c14" stroke-width="0.6"/><path d="M0.7 5.1H7.3M0.7 6.9H7.3" stroke="#f2d060" stroke-width="0.9"/></g></svg>
<div class="t" style="left:120.92px;top:392px;font-size:12px;line-height:14px;transform:scaleX(0.9505)">File System</div>
<svg class="a" style="left:84.82000000000005px;top:413.2px" width="7" height="10" viewBox="0 0 7 10"><path d="M1.3 1.3L5 5 1.3 8.7" fill="none" stroke="#a0a0a0" stroke-width="1.7"/></svg>
<svg class="a" style="left:99.7px;top:409px" width="16" height="16" viewBox="0 0 16 16"><linearGradient id="g26" x1="0" y1="0" x2="0" y2="1"><stop offset="0" stop-color="#dfe3e6"/><stop offset=".5" stop-color="#c9ced3"/><stop offset="1" stop-color="#8d959d"/></linearGradient><rect x="0.3" y="0.3" width="7.4" height="15.4" fill="url(#g26)" stroke="#8a9098" stroke-width=".7"/><rect x="1.5" y="1.5" width="5.0" height="1.1" fill="#2c3840"/><rect x="1.3" y="3.0999999999999996" width="5.4" height="1.6" fill="#f6f8fa"/><rect x="1.3" y="5.7" width="5.4" height="1.6" fill="#eef2f5"/><path d="M6.4 2.6H14.4a1.3 1.3 0 0 0 0 2.2H13.8V12.8H6.4Z" fill="#fdf6da" stroke="#bcb49c" stroke-width=".6"/><rect x="1.4" y="13.2" width="5.6" height="2" rx=".8" fill="#f9e7a4" stroke="#a89c7c" stroke-width=".5"/><rect x="6.8" y="6.6" width="5" height="6.6" rx=".6" fill="#93a6c8" stroke="#5f76a0" stroke-width=".6"/><path d="M8.6 8h1.4v1.6l-.3 2.2h-.8l-.3-2.2z" fill="#fff"/><rect x="7.6" y="13.2" width="3.4" height="2.6" fill="#28a8e8"/></svg>
<div class="t" style="left:121.23px;top:410px;font-size:12px;line-height:14px;transform:scaleX(0.9406)">Wired Network (IEEE 802.3) Policies</div>
<div class="a" style="left:358px;top:83px;width:17px;height:343px;background:#f0f0f0"></div>
<div class="a" style="left:358px;top:110px;width:15px;height:163px;background:#cdcdcd"></div>
<svg class="a" style="left:361px;top:89px" width="10" height="8" viewBox="0 0 10 8"><path d="M1 6L5 2 9 6" fill="none" stroke="#484848" stroke-width="2.2"/></svg>
<svg class="a" style="left:361px;top:412px" width="10" height="8" viewBox="0 0 10 8"><path d="M1 2L5 6 9 2" fill="none" stroke="#484848" stroke-width="2.2"/></svg>
<div class="a" style="left:1px;top:426px;width:374px;height:16px;background:#f0f0f0"></div>
<div class="a" style="left:19px;top:426px;width:201px;height:16px;background:#cdcdcd"></div>
<svg class="a" style="left:6px;top:429px" width="8" height="10" viewBox="0 0 8 10"><path d="M6.2 1.4L2.5 5 6.2 8.6" fill="none" stroke="#404040" stroke-width="2.2"/></svg>
<svg class="a" style="left:345px;top:429px" width="8" height="10" viewBox="0 0 8 10"><path d="M1.8 1.4L5.5 5 1.8 8.6" fill="none" stroke="#404040" stroke-width="2.2"/></svg>
<div class="a" style="left:380px;top:426px;width:290px;height:16px;background:#f0f0f0"></div>
<div class="a" style="left:398px;top:426px;width:270px;height:16px;background:#cdcdcd"></div>
<svg class="a" style="left:385px;top:429px" width="8" height="10" viewBox="0 0 8 10"><path d="M6.2 1.4L2.5 5 6.2 8.6" fill="none" stroke="#404040" stroke-width="2.2"/></svg>
<svg class="a" style="left:552px;top:83px" width="10" height="6" viewBox="0 0 10 6"><path d="M1 5L5 1 9 5" fill="none" stroke="#8a8a8a" stroke-width="1"/></svg>
<div class="t" style="left:387.17px;top:89px;font-size:12px;line-height:14px;transform:scaleX(1.0046)">Policy</div>
<svg class="a" style="left:386.5px;top:109.6px" width="16" height="16" viewBox="0 0 16 16"><path d="M0.6 0.6H10L13.2 3.8V14.6L11.8 13.2 10.6 14.2H8.4L7.6 13.6H3.2L2 13 0.6 12.2Z" fill="#fff" stroke="#a6a6a6" stroke-width="1"/><path d="M10 0.6V3.8H13.2" fill="#fafafa" stroke="#b0b0b0" stroke-width=".8"/><path d="M1 12.6L3.2 14H7.6L8.4 14.7H10.6L11.8 13.8 13.2 15" fill="none" stroke="#8c8c8c" stroke-width="1"/><text x="2.2" y="6.4" font-size="5.4" font-family="Liberation Sans, sans-serif" fill="#7c7ca0" stroke="#7c7ca0" stroke-width=".12" textLength="5.6" lengthAdjust="spacingAndGlyphs">10</text><text x="2.2" y="11.6" font-size="5.4" font-family="Liberation Sans, sans-serif" fill="#7c7ca0" stroke="#7c7ca0" stroke-width=".12" textLength="8.6" lengthAdjust="spacingAndGlyphs">010</text></svg>
<div class="t" style="left:402.78px;top:111px;font-size:12px;line-height:14px;transform:scaleX(0.9793)">Enforce password history</div>
<svg class="a" style="left:386.5px;top:128.6px" width="16" height="16" viewBox="0 0 16 16"><path d="M0.6 0.6H10L13.2 3.8V14.6L11.8 13.2 10.6 14.2H8.4L7.6 13.6H3.2L2 13 0.6 12.2Z" fill="#fff" stroke="#a6a6a6" stroke-width="1"/><path d="M10 0.6V3.8H13.2" fill="#fafafa" stroke="#b0b0b0" stroke-width=".8"/><path d="M1 12.6L3.2 14H7.6L8.4 14.7H10.6L11.8 13.8 13.2 15" fill="none" stroke="#8c8c8c" stroke-width="1"/><text x="2.2" y="6.4" font-size="5.4" font-family="Liberation Sans, sans-serif" fill="#7c7ca0" stroke="#7c7ca0" stroke-width=".12" textLength="5.6" lengthAdjust="spacingAndGlyphs">10</text><text x="2.2" y="11.6" font-size="5.4" font-family="Liberation Sans, sans-serif" fill="#7c7ca0" stroke="#7c7ca0" stroke-width=".12" textLength="8.6" lengthAdjust="spacingAndGlyphs">010</text></svg>
<div class="t" style="left:402.65px;top:130px;font-size:12px;line-height:14px;transform:scaleX(0.9955)">Maximum password age</div>
<svg class="a" style="left:386.5px;top:147.6px" width="16" height="16" viewBox="0 0 16 16"><path d="M0.6 0.6H10L13.2 3.8V14.6L11.8 13.2 10.6 14.2H8.4L7.6 13.6H3.2L2 13 0.6 12.2Z" fill="#fff" stroke="#a6a6a6" stroke-width="1"/><path d="M10 0.6V3.8H13.2" fill="#fafafa" stroke="#b0b0b0" stroke-width=".8"/><path d="M1 12.6L3.2 14H7.6L8.4 14.7H10.6L11.8 13.8 13.2 15" fill="none" stroke="#8c8c8c" stroke-width="1"/><text x="2.2" y="6.4" font-size="5.4" font-family="Liberation Sans, sans-serif" fill="#7c7ca0" stroke="#7c7ca0" stroke-width=".12" textLength="5.6" lengthAdjust="spacingAndGlyphs">10</text><text x="2.2" y="11.6" font-size="5.4" font-family="Liberation Sans, sans-serif" fill="#7c7ca0" stroke="#7c7ca0" stroke-width=".12" textLength="8.6" lengthAdjust="spacingAndGlyphs">010</text></svg>
<div class="t" style="left:402.77px;top:149px;font-size:12px;line-height:14px;transform:scaleX(1.0124)">Minimum password age</div>
<svg class="a" style="left:386.5px;top:166.6px" width="16" height="16" viewBox="0 0 16 16"><path d="M0.6 0.6H10L13.2 3.8V14.6L11.8 13.2 10.6 14.2H8.4L7.6 13.6H3.2L2 13 0.6 12.2Z" fill="#fff" stroke="#a6a6a6" stroke-width="1"/><path d="M10 0.6V3.8H13.2" fill="#fafafa" stroke="#b0b0b0" stroke-width=".8"/><path d="M1 12.6L3.2 14H7.6L8.4 14.7H10.6L11.8 13.8 13.2 15" fill="none" stroke="#8c8c8c" stroke-width="1"/><text x="2.2" y="6.4" font-size="5.4" font-family="Liberation Sans, sans-serif" fill="#7c7ca0" stroke="#7c7ca0" stroke-width=".12" textLength="5.6" lengthAdjust="spacingAndGlyphs">10</text><text x="2.2" y="11.6" font-size="5.4" font-family="Liberation Sans, sans-serif" fill="#7c7ca0" stroke="#7c7ca0" stroke-width=".12" textLength="8.6" lengthAdjust="spacingAndGlyphs">010</text></svg>
<div class="t" style="left:402.75px;top:168px;font-size:12px;line-height:14px;transform:scaleX(1.0254)">Minimum password length</div>
<svg class="a" style="left:386.5px;top:185.6px" width="16" height="16" viewBox="0 0 16 16"><path d="M0.6 0.6H10L13.2 3.8V14.6L11.8 13.2 10.6 14.2H8.4L7.6 13.6H3.2L2 13 0.6 12.2Z" fill="#fff" stroke="#a6a6a6" stroke-width="1"/><path d="M10 0.6V3.8H13.2" fill="#fafafa" stroke="#b0b0b0" stroke-width=".8"/><path d="M1 12.6L3.2 14H7.6L8.4 14.7H10.6L11.8 13.8 13.2 15" fill="none" stroke="#8c8c8c" stroke-width="1"/><text x="2.2" y="6.4" font-size="5.4" font-family="Liberation Sans, sans-serif" fill="#7c7ca0" stroke="#7c7ca0" stroke-width=".12" textLength="5.6" lengthAdjust="spacingAndGlyphs">10</text><text x="2.2" y="11.6" font-size="5.4" font-family="Liberation Sans, sans-serif" fill="#7c7ca0" stroke="#7c7ca0" stroke-width=".12" textLength="8.6" lengthAdjust="spacingAndGlyphs">010</text></svg>
<div class="t" style="left:402.77px;top:187px;font-size:12px;line-height:14px;transform:scaleX(0.9956)">Password must meet complexity requirements</div>
<svg class="a" style="left:386.5px;top:204.6px" width="16" height="16" viewBox="0 0 16 16"><path d="M0.6 0.6H10L13.2 3.8V14.6L11.8 13.2 10.6 14.2H8.4L7.6 13.6H3.2L2 13 0.6 12.2Z" fill="#fff" stroke="#a6a6a6" stroke-width="1"/><path d="M10 0.6V3.8H13.2" fill="#fafafa" stroke="#b0b0b0" stroke-width=".8"/><path d="M1 12.6L3.2 14H7.6L8.4 14.7H10.6L11.8 13.8 13.2 15" fill="none" stroke="#8c8c8c" stroke-width="1"/><text x="2.2" y="6.4" font-size="5.4" font-family="Liberation Sans, sans-serif" fill="#7c7ca0" stroke="#7c7ca0" stroke-width=".12" textLength="5.6" lengthAdjust="spacingAndGlyphs">10</text><text x="2.2" y="11.6" font-size="5.4" font-family="Liberation Sans, sans-serif" fill="#7c7ca0" stroke="#7c7ca0" stroke-width=".12" textLength="8.6" lengthAdjust="spacingAndGlyphs">010</text></svg>
<div class="t" style="left:402.82px;top:206px;font-size:12px;line-height:14px;transform:scaleX(0.9784)">Store passwords using reversible encryption</div>
</div>
<div class="a" style="left:884px;top:446px;width:1px;height:5px;background:#d4d4d4"></div>
<div class="a" style="left:535px;top:0;width:446px;height:1px;background:#001a3d"></div>
<div class="a" style="left:0;top:0;width:535px;height:1px;background:#fff"></div></body></html>
